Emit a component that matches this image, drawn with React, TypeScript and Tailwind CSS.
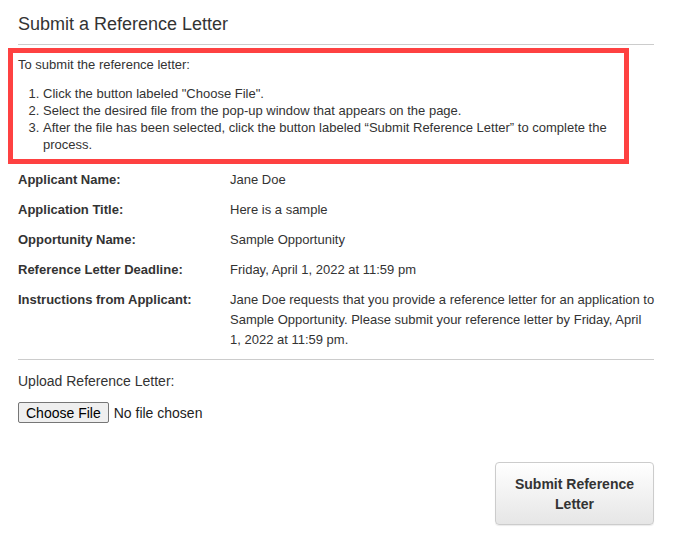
import React from "react";

const rows: { label: string; value: string }[] = [
  { label: "Applicant Name:", value: "Jane Doe" },
  { label: "Application Title:", value: "Here is a sample" },
  { label: "Opportunity Name:", value: "Sample Opportunity" },
  { label: "Reference Letter Deadline:", value: "Friday, April 1, 2022 at 11:59 pm" },
  {
    label: "Instructions from Applicant:",
    value:
      "Jane Doe requests that you provide a reference letter for an application to Sample Opportunity. Please submit your reference letter by Friday, April 1, 2022 at 11:59 pm.",
  },
];

export default function App() {
  return (
    <div
      className="w-[677px] h-[542px] bg-white text-[#333333] px-[18px] pt-[11px]"
      style={{ fontFamily: '"Liberation Sans", Arial, sans-serif' }}
    >
      <div className="w-[636px]">
        <h1 className="text-[18px] leading-[26px] font-normal">Submit a Reference Letter</h1>
        <div className="mt-[7px] border-t border-[#cccccc]" />

        <div className="mt-[3px] -ml-[10px] w-[621px] border-[5px] border-[#fe4141] pl-[5px] pr-[5px] pt-[3px] pb-[6px] text-[13px] leading-[17px]">
          <p>To submit the reference letter:</p>
          <ol className="mt-[12px] list-decimal pl-[25px]">
            <li>Click the button labeled "Choose File".</li>
            <li>Select the desired file from the pop-up window that appears on the page.</li>
            <li>
              After the file has been selected, click the button labeled “Submit Reference Letter” to complete the
              process.
            </li>
          </ol>
        </div>

        <div className="mt-[6px] text-[13px] leading-[20px]">
          {rows.map((r) => (
            <div key={r.label} className="flex pb-[10px]">
              <div className="w-[212px] shrink-0 font-bold">{r.label}</div>
              <div className="w-[425px] shrink-0">{r.value}</div>
            </div>
          ))}
        </div>

        <div className="-mt-[1px] border-t border-[#cccccc]" />

        <div className="mt-[11px] text-[14px] leading-[20px]">Upload Reference Letter:</div>
        <div className="mt-[11px] flex items-center text-[14px] leading-[20px]">
          <span className="inline-flex h-[21px] items-center rounded-[2px] border border-[#767676] bg-[#efefef] px-[7px] text-black">
            Choose File
          </span>
          <span className="ml-[5px] text-[#222222]">No file chosen</span>
        </div>

        <div className="mt-[39px] flex justify-end">
          <button className="flex h-[63px] w-[159px] items-center justify-center rounded-[4px] border border-[#cccccc] bg-gradient-to-b from-white to-[#e6e6e6] px-[16px] text-center text-[14px] font-bold leading-[20px] text-[#333333] shadow-[0_1px_1px_rgba(0,0,0,0.08)]">
            Submit Reference Letter
          </button>
        </div>
      </div>
    </div>
  );
}
